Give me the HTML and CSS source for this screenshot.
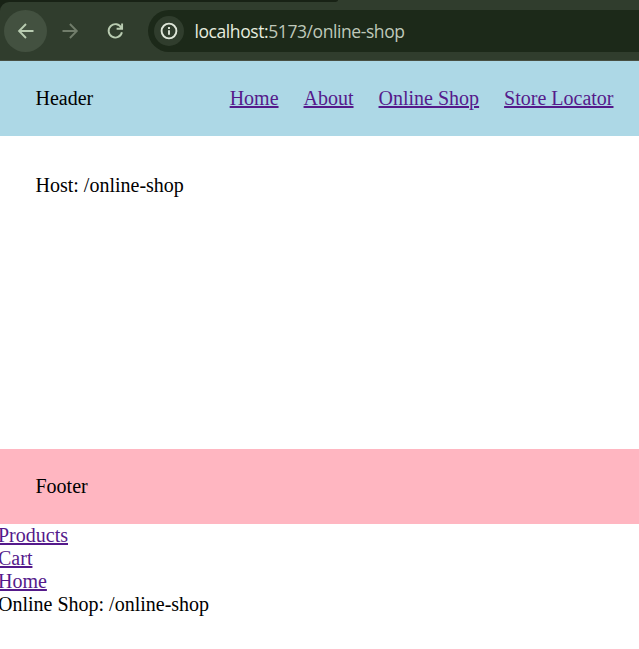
FILE: index.html
```html
<!DOCTYPE html>
<html lang="en">
<head>
<meta charset="utf-8">
<title>Online Shop</title>
<link rel="stylesheet" href="styles.css">
</head>
<body>
<div class="browser">
  <div class="tabstrip"><div class="tabs"></div></div>
  <div class="toolbar">
    <div class="tool back">
      <svg width="20" height="20" viewBox="0 0 20 20"><path d="M17.5 10H3.4M10 3L3.1 10l6.9 7"/></svg>
    </div>
    <div class="tool forward">
      <svg width="20" height="20" viewBox="0 0 20 20"><path d="M1.5 10h14.2M8.9 3l6.9 7-6.9 7"/></svg>
    </div>
    <div class="tool reload">
      <svg width="20" height="20" viewBox="0 0 20 20"><path d="M15.4 7A6.7 6.7 0 1 0 15.9 11.2M16.1 2.4v5.3h-5.5"/></svg>
    </div>
    <div class="address">
      <span class="info">
        <svg width="18" height="18" viewBox="0 0 18 18"><circle cx="9" cy="9" r="7.4"/><path d="M9 8.2v4.6M9 5v2"/></svg>
      </span>
      <span class="url"><b>localhost:</b>5173/online-shop</span>
    </div>
  </div>
</div>
<header class="bar header">
  <span>Header</span>
  <nav class="nav">
    <a href="#">Home</a>
    <a href="#">About</a>
    <a href="#">Online Shop</a>
    <a href="#">Store Locator</a>
  </nav>
</header>
<main class="main">Host: /online-shop</main>
<footer class="bar footer">Footer</footer>
<section class="shop">
  <div><a href="#">Products</a></div>
  <div><a href="#">Cart</a></div>
  <div><a href="#">Home</a></div>
  <div>Online Shop: /online-shop</div>
</section>
</body>
</html>
```
FILE: styles.css
```css
* { box-sizing: border-box; }
body {
  margin: 0;
  height: 649px;
  overflow: hidden;
  background: #fff;
  color: #000;
  font: 20px/23px "Liberation Serif", serif;
}
a { color: #551a8b; text-decoration-thickness: 2px; }
.browser {
  height: 61px;
  background: #182215;
  border-bottom: 1px solid #474f42;
}
.tabstrip { height: 2px; background: #303d2d; }
.tabs {
  width: 338px;
  height: 2px;
  background: #182215;
  border-bottom-right-radius: 4px 2px;
}
.toolbar {
  display: flex;
  align-items: center;
  height: 58px;
  padding: 0 0 0 4px;
  background: #303d2d;
  border-top-left-radius: 9px;
}
.tool {
  display: flex;
  align-items: center;
  justify-content: center;
  width: 43px;
  height: 42px;
  margin-right: 2px;
  border-radius: 50%;
}
.tool svg { margin-top: -1px; }
.tool svg, .info svg { fill: none; stroke: #b9ccb1; stroke-width: 1.9; }
.back { background: #435140; }
.forward svg { stroke: #717d6b; }
.reload { margin-right: 11px; }
.address {
  display: flex;
  align-items: center;
  flex: 1;
  height: 42px;
  padding-left: 6px;
  background: #1c2919;
  border-radius: 21px 0 0 21px;
}
.info {
  display: flex;
  align-items: center;
  justify-content: center;
  width: 30px;
  height: 30px;
  margin-right: 10.5px;
  border-radius: 50%;
  background: #303d2d;
}
.info svg { stroke: #dfe6d9; }
.url {
  font: 17.5px/24px "Open Sans", sans-serif;
  letter-spacing: -0.42px;
  color: #bfc8b9;
}
.url b { font-weight: 400; color: #e6ecdf; }
.bar {
  display: flex;
  align-items: center;
  justify-content: space-between;
  height: 75px;
  padding: 0 25.5px 0 35.5px;
}
.header { background: lightblue; }
.nav { display: flex; gap: 25px; }
.main { height: 313px; padding: 38px 35.5px; }
.footer { background: lightpink; }
.shop { margin-left: -2px; }
```
